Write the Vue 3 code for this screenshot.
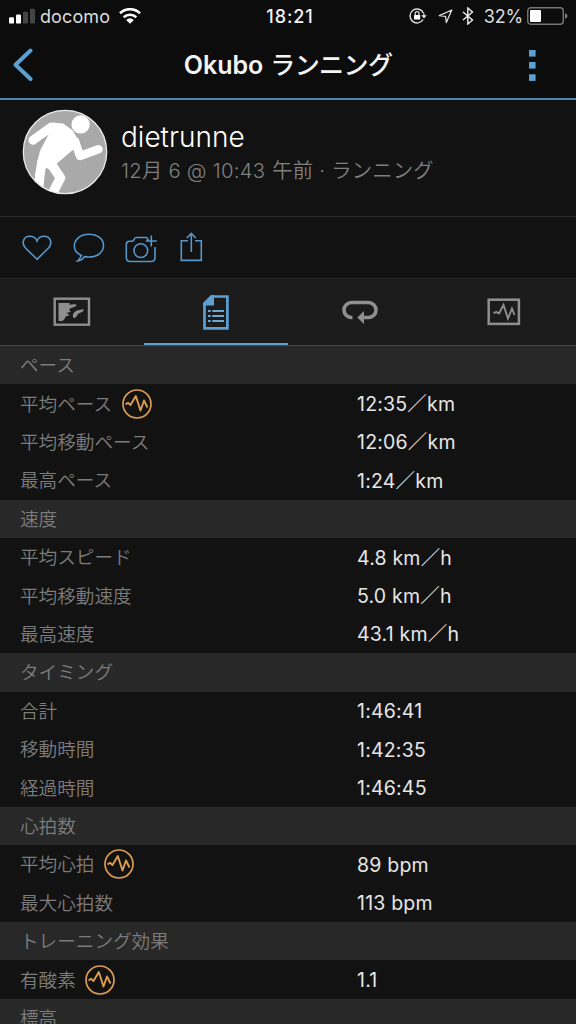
<script setup>
const sections = [
  { title: 'ペース', rows: [
    { label: '平均ペース', value: '12:35／km', badge: true },
    { label: '平均移動ペース', value: '12:06／km' },
    { label: '最高ペース', value: '1:24／km' },
  ] },
  { title: '速度', rows: [
    { label: '平均スピード', value: '4.8 km／h' },
    { label: '平均移動速度', value: '5.0 km／h' },
    { label: '最高速度', value: '43.1 km／h' },
  ] },
  { title: 'タイミング', rows: [
    { label: '合計', value: '1:46:41' },
    { label: '移動時間', value: '1:42:35' },
    { label: '経過時間', value: '1:46:45' },
  ] },
  { title: '心拍数', rows: [
    { label: '平均心拍', value: '89 bpm', badge: true },
    { label: '最大心拍数', value: '113 bpm' },
  ] },
  { title: 'トレーニング効果', rows: [
    { label: '有酸素', value: '1.1', badge: true },
  ] },
  { title: '標高', rows: [] },
]
const parts = (value) => value.split('／')
</script>

<template>
  <div class="screen">
    <header class="top">
      <div class="status">
        <div class="status-left">
          <svg width="27" height="17" viewBox="0 0 27 17">
            <rect x="0" y="9.300" width="5" height="6.300" rx="1.200" fill="#fff" />
            <rect x="7" y="6.500" width="5" height="9.100" rx="1.200" fill="#fff" />
            <rect x="14" y="3.800" width="5" height="11.800" rx="1.200" fill="#444" />
            <rect x="21" y=".8" width="5" height="14.800" rx="1.200" fill="#444" />
          </svg>
          <span class="carrier">docomo</span>
          <svg class="wifi" width="22" height="16" viewBox="0 0 22 16" fill="none" stroke="#fff" stroke-width="2.700">
            <path d="M1 5.300C6.700-.1 15.300-.1 21 5.300" />
            <path d="M4.700 9.200C8.300 5.900 13.700 5.900 17.300 9.200" />
            <path d="M7.200 11.900Q11 8.600 14.800 11.900L11 15.700Z" fill="#fff" stroke="none" />
          </svg>
        </div>
        <div class="clock">18:21</div>
        <div class="status-right">
          <svg width="18" height="16" viewBox="0 0 18 16" fill="none" stroke="#ddd" stroke-width="1.400">
            <path d="M14.500 5.200A7 7 0 1 0 14.100 11.500M14.900 5.500V8.600" />
            <path d="M12.200 7.200h5.600l-2.800 3.300z" fill="#ddd" stroke="none" />
            <rect x="5" y="7" width="6.200" height="4.500" rx=".5" fill="#fff" stroke="none" />
            <path d="M6.200 7V5.500a1.900 1.900 0 0 1 3.800 0V7" stroke-width="1.200" />
          </svg>
          <svg class="locate" width="15" height="15" viewBox="0 0 15 15" fill="none" stroke="#ddd" stroke-width="1.300" stroke-linejoin="round">
            <path d="M13.800 1L1.300 6.700L7.500 7.400L8.300 13.500Z" />
          </svg>
          <svg class="bt" width="12" height="18" viewBox="0 0 12 18" fill="none" stroke="#eee" stroke-width="1.400">
            <path d="M1 5L10.500 13L5.800 17V1L10.500 5L1 13" />
          </svg>
          <span class="percent">32%</span>
          <svg class="battery" width="41" height="18" viewBox="0 0 41 18">
            <rect x=".75" y=".75" width="35.500" height="16.500" rx="3" fill="none" stroke="#777" stroke-width="1.400" />
            <rect x="3" y="3" width="11" height="12" rx="1" fill="#fff" />
            <path d="M38 6q2.500 .8 2.500 3t-2.500 3z" fill="#777" />
          </svg>
        </div>
      </div>
      <div class="nav">
        <svg class="back" width="22" height="34" viewBox="0 0 22 34" fill="none" stroke="#5b9fd3" stroke-width="4" stroke-linecap="round" stroke-linejoin="round">
          <path d="M18.500 2.500L3.500 16.700L18.500 31" />
        </svg>
        <h1><span class="place">Okubo</span><span class="kind">ランニング</span></h1>
        <svg class="more" width="7" height="31" viewBox="0 0 7 31" fill="#5b9fd3">
          <rect width="6.600" height="6.600" /><rect y="12" width="6.600" height="6.600" /><rect y="24.300" width="6.600" height="6.600" />
        </svg>
      </div>
    </header>

    <section class="profile">
      <svg class="avatar" width="86" height="86" viewBox="0 0 86 86">
        <defs><clipPath id="disc"><circle cx="43" cy="43" r="42" /></clipPath></defs>
        <circle cx="43" cy="43" r="42" fill="#a9a9a9" />
        <g clip-path="url(#disc)" fill="none" stroke="#fff" stroke-linecap="round" stroke-linejoin="round">
          <circle cx="58.600" cy="15.400" r="9.200" fill="#fff" stroke="none" />
          <path d="M11 31.200L29.500 18" stroke-width="9" />
          <path d="M31 14.500L41 15.500L50 22L56 33L54 38L48 42L34.500 53.500L27 59L16 54L19 42L27.500 26Z" fill="#fff" stroke-width="2" />
          <path d="M53 32L58 47L76.500 40.300" stroke-width="8.500" />
          <path d="M20 53L18 65L15.500 90" stroke-width="9.500" />
          <path d="M28.500 54L38.500 69L29 87" stroke-width="9.500" />
        </g>
        <circle cx="43" cy="43" r="41.700" fill="none" stroke="#e9e9e9" stroke-width="1.300" />
      </svg>
      <div class="who">
        <div class="name">dietrunne</div>
        <div class="when"><span class="d1">12月 6 @ 10:43</span><span class="d2">午前 · ランニング</span></div>
      </div>
    </section>

    <section class="actions">
      <svg width="30" height="26" viewBox="0 0 30 26">
        <path d="M15 24.300L3.500 13C-1.200 7.500 2 1.300 7.700 1.300C11.500 1.300 14 3.500 15 6C16 3.500 18.500 1.300 22.300 1.300C28 1.300 31.200 7.500 26.500 13Z" />
      </svg>
      <svg width="32" height="30" viewBox="0 0 32 30">
        <path d="M8.500 22.500C4 20.500 1.300 17 1.300 13C1.300 6.200 7.500 1.300 16 1.300S30.500 6 30.500 12.600S24.500 24 16 24Q13.500 24 11.500 23.600Q9 27.500 4.500 28Q7 25.800 8.500 22.500Z" />
      </svg>
      <svg width="33" height="29" viewBox="0 0 33 29">
        <path d="M22 3.500H11.500Q9.500 3.500 9 5.500T6.500 7.200H4.500Q1.300 7.200 1.300 10.500V23.500Q1.300 27.500 5.300 27.500H26Q30 27.500 30 23.500V13M22 3.500Q22.400 6 24 7M26.300 1.500V12.500M20.800 7H31.800" />
        <circle cx="15.800" cy="16.600" r="6.900" />
      </svg>
      <svg width="23" height="30" viewBox="0 0 23 30">
        <path d="M8 8.700H1.300V28.400H21.300V8.700H15M11.300 20V1.500M6.800 6L11.300 1.500L15.800 6" />
      </svg>
    </section>

    <nav class="tabs">
      <div class="tab">
        <svg width="38" height="30" viewBox="0 0 38 30">
          <rect x="1.700" y="1.700" width="34.300" height="26" fill="none" stroke="#8f8f8f" stroke-width="2.400" />
          <path d="M5.500 6H16.500V7.800L21 7.200Q25 7 22.500 9.500L17.500 11.200L16 13L18 14.800L13.500 16L16.500 18L12 20V21.500L9.500 24H5.500Z" fill="#8f8f8f" />
          <path d="M20 20Q19 15.500 24 13.500L30 12.200Q32 12.500 29 15L25.500 16.500L23 20Q20.500 22 20 20Z" fill="#8f8f8f" />
        </svg>
      </div>
      <div class="tab active">
        <svg width="26" height="35" viewBox="0 0 26 35">
          <path d="M9 1.500H24.400V33.300H1.500V9Z" fill="none" stroke="#5b9fd3" stroke-width="2.700" />
          <path d="M8 0H11V10.500H0V8Z" fill="#5b9fd3" />
          <path d="M5 16h2.700m1.600 0H21M5 21h2.700m1.600 0H21M5 26h2.700m1.600 0H21" stroke="#6ba8d6" stroke-width="2.200" />
        </svg>
      </div>
      <div class="tab">
        <svg width="36" height="24" viewBox="0 0 36 24">
          <path d="M10.500 17.500H9.500A7.500 7.500 0 0 1 9.500 2.500H26.500A7.500 7.500 0 0 1 26.500 17.500H20" fill="none" stroke="#8f8f8f" stroke-width="3.600" />
          <path d="M15.300 17.500L22 11V24Z" fill="#8f8f8f" />
        </svg>
      </div>
      <div class="tab">
        <svg width="34" height="28" viewBox="0 0 34 28" fill="none" stroke="#8f8f8f">
          <rect x="1.700" y="1.700" width="30.200" height="24.200" stroke-width="2.500" />
          <path d="M6.500 15L9.500 14L12 15.500L16.500 7L21 20.500L25 10.500L27.500 17" stroke-width="1.900" />
        </svg>
      </div>
    </nav>

    <main>
      <section v-for="section in sections" :key="section.title">
        <h2>{{ section.title }}</h2>
        <div v-for="row in section.rows" :key="row.label" class="row">
          <div class="label">
            <span>{{ row.label }}</span>
            <svg v-if="row.badge" class="badge" width="30" height="30" viewBox="0 0 30 30" fill="none" stroke="#dc9c51">
              <circle cx="15" cy="15" r="14" stroke-width="1.700" />
              <path d="M3.500 15.500L6 13.800L8.500 16L13.800 7L18.500 21.500L22 11.500L25.500 18.500" stroke-width="1.900" stroke-linejoin="round" />
            </svg>
          </div>
          <div class="value">{{ parts(row.value)[0] }}<span v-if="parts(row.value)[1]" class="slash">／</span>{{ parts(row.value)[1] }}</div>
        </div>
      </section>
    </main>
  </div>
</template>

<style>
body { margin: 0; background: #111; }
</style>

<style scoped>
.screen {
  width: 576px;
  height: 1024px;
  overflow: hidden;
  background: #121212;
  color: #f4f4f4;
  font-family: Inter, "Noto Sans CJK JP", sans-serif;
}
svg { display: block; flex: none; }
.top { height: 98px; background: #0c0c0c; border-bottom: 2px solid #4c86b0; }
.status { display: grid; grid-template-columns: 1fr auto 1fr; height: 32px; align-items: center; white-space: nowrap; }
.status-left { display: flex; align-items: center; padding-left: 9px; }
.carrier { margin-left: 4px; font-size: 18px; letter-spacing: .1px; color: #ddd; }
.wifi { margin-left: 9px; }
.clock { font-size: 18px; font-weight: 500; letter-spacing: .9px; padding-left: 4px; }
.status-right { display: flex; align-items: center; justify-content: flex-end; padding-right: 8px; }
.locate { margin-left: 11px; }
.bt { margin-left: 9px; }
.percent { margin-left: 10px; font-size: 18px; letter-spacing: -.2px; color: #ddd; }
.battery { margin-left: 4px; }
.nav { height: 66px; display: grid; grid-template-columns: 1fr auto 1fr; align-items: center; }
.back { margin-left: 12px; }
.more { justify-self: end; margin-right: 40px; }
h1 { margin: 0; display: flex; gap: 7px; align-items: baseline; font-size: 25px; font-weight: 600; line-height: 36px; }
.kind { letter-spacing: -.6px; font-weight: 500; }
.profile { height: 116px; box-sizing: border-box; display: flex; padding: 9px 0 0 22px; }
.who { margin-left: 13px; padding-top: 9px; }
.name { font-size: 28px; line-height: 38px; font-weight: 300; color: #fff; }
.when { display: flex; gap: 7px; font-size: 20.300px; line-height: 30px; font-weight: 350; letter-spacing: .25px; color: #808080; white-space: nowrap; }
.actions { height: 61px; border-top: 1px solid #292929; border-bottom: 1px solid #292929; display: flex; align-items: center; padding-left: 22px; }
.actions svg { fill: none; stroke: #5596cb; stroke-width: 1.600; }
.actions svg + svg { margin-left: 21px; }
.actions svg:nth-child(3) { margin-left: 20px; margin-top: 2px; }
.actions svg:last-child { margin-left: 22px; margin-bottom: 1px; }
.tabs { height: 66px; display: grid; grid-template-columns: repeat(4, 1fr); background: #1b1b1b; border-bottom: 1px solid #484848; }
.tab { display: flex; justify-content: center; align-items: center; }
.active { box-shadow: inset 0 -2px #5b9fd3; }
h2, .row { box-sizing: border-box; height: 38.400px; margin: 0; padding-left: 20px; line-height: 38px; font-size: 18.600px; font-weight: 350; color: #7c7c7c; }
h2 { background: #282828; }
.row { display: grid; grid-template-columns: 337px 1fr; align-items: center; }
.label { display: flex; align-items: center; }
.badge { margin-left: 9.600px; }
.value { font-size: 19.500px; font-weight: 400; letter-spacing: .2px; color: #e6e6e6; white-space: nowrap; padding-top: .6px; }
.slash { font-weight: 400; }
</style>
